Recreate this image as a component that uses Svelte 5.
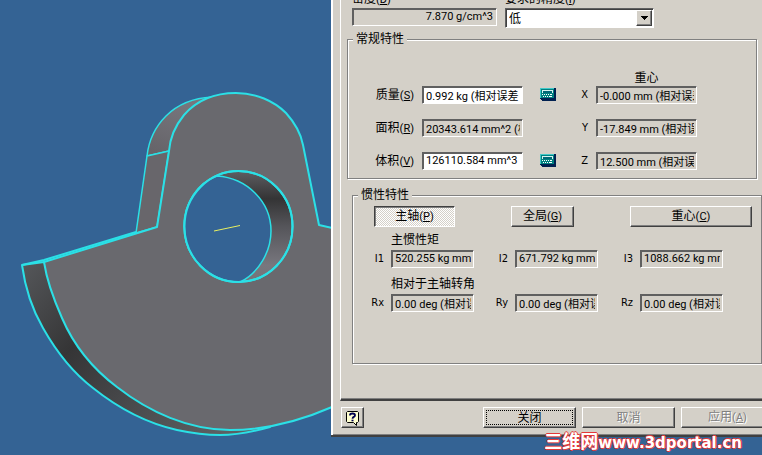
<script lang="ts">
  type Property = {
    id: string
    label: string
    key: string
    value: string
    editable: boolean
    axis: string
    center: string
  }

  const properties: Property[] = [
    { id: 'mass', label: '质量', key: 'S', value: '0.992 kg (相对误差 = 0.0001%)', editable: true, axis: 'X', center: '-0.000 mm (相对误差)' },
    { id: 'area', label: '面积', key: 'R', value: '20343.614 mm^2 (相对误差)', editable: false, axis: 'Y', center: '-17.849 mm (相对误差)' },
    { id: 'volume', label: '体积', key: 'V', value: '126110.584 mm^3', editable: true, axis: 'Z', center: '12.500 mm (相对误差)' },
  ]

  const sections = [
    {
      title: '主惯性矩',
      fields: [
        { name: 'I1', value: '520.255 kg mm^2' },
        { name: 'I2', value: '671.792 kg mm^2' },
        { name: 'I3', value: '1088.662 kg mm^2' },
      ],
    },
    {
      title: '相对于主轴转角',
      fields: [
        { name: 'Rx', value: '0.00 deg (相对误差)' },
        { name: 'Ry', value: '0.00 deg (相对误差)' },
        { name: 'Rz', value: '0.00 deg (相对误差)' },
      ],
    },
  ]

  let mode = $state('principal')
  let accuracy = $state('low')
</script>

{#snippet hotkey(key: string)}<span class="hotkey">(<u>{key}</u>)</span>{/snippet}

{#snippet calculator()}
  <svg class="calc" width="16" height="16" viewBox="0 0 16 16" aria-hidden="true" shape-rendering="crispEdges">
    <path d="M0 2h15l1 1v12H2l-2-2z" fill="#002050" />
    <path d="M0 2h14v10H0z" fill="#008080" />
    <path d="M0 2h14v1H1v9H0z" fill="#40c8c8" />
    <path d="M2 4h11v3H2z" fill="#d8f4f0" />
    <path d="M3 5h9v2H3z" fill="#006878" />
    <path d="M2 8h1v1H2zM4 8h1v1H4zM6 8h1v1H6zM8 8h1v1H8zM10 8h2v1h-2zM3 10h1v1H3zM5 10h1v1H5zM7 10h1v1H7zM9 10h3v1H9z" fill="#fff" />
  </svg>
{/snippet}

<main class="desktop">
  <svg class="model" width="340" height="455" viewBox="0 0 340 455" aria-hidden="true">
    <defs>
      <linearGradient id="rim" x1="22" y1="265" x2="220" y2="435" gradientUnits="userSpaceOnUse">
        <stop offset="0" stop-color="#55575a" />
        <stop offset="0.35" stop-color="#353536" />
        <stop offset="0.6" stop-color="#454648" />
        <stop offset="1" stop-color="#5c6063" />
      </linearGradient>
      <linearGradient id="bore" x1="0" y1="171" x2="0" y2="282" gradientUnits="userSpaceOnUse">
        <stop offset="0" stop-color="#5e5e62" />
        <stop offset="0.25" stop-color="#343435" />
        <stop offset="0.5" stop-color="#55555a" />
        <stop offset="0.85" stop-color="#78777e" />
        <stop offset="1" stop-color="#747379" />
      </linearGradient>
      <linearGradient id="shoulder" x1="180" y1="100" x2="160" y2="154" gradientUnits="userSpaceOnUse">
        <stop offset="0" stop-color="#77767d" />
        <stop offset="1" stop-color="#666469" />
      </linearGradient>
    </defs>

    <g stroke="#2be0e6" stroke-width="2" stroke-linejoin="round">
      <path fill="url(#rim)" d="M22 265C25 287 32 309 43 328C56 351 72 372 93 388C118 408 146 423 177 430C191 433 206 435 220 435C236 435 252 432 270 427L230 400L44 262Z" />
      <path fill="url(#shoulder)" stroke-width="1.5" d="M147 156C149 138 156 126 166 116C178 104 193 98 212 97L200 150L169 151Z" />
      <path fill="#68666b" stroke-width="1.5" d="M147 156L136 233L157 227L169 151Z" />
      <path fill="#69696e" d="M44 262L157 227L169 151C170 138 175 126 184 115C197 100 215 93 236 93C256 93 274 101 286 113C295 123 301 134 303 145L319 225L345 231V401L332 407C300 421 265 430 230 430C189 430 149 412 117 387C93 369 74 346 62 318C54 300 47 282 44 262Z" />
      <path fill="none" d="M22 265L44 260L136 232" />
      <ellipse fill="url(#bore)" cx="238.500" cy="226.500" rx="54" ry="55.500" />
      <path fill="#346394" stroke-width="1.5" d="M217 176C232 177 245 183 255 193C265 203 271 217 271 231C271 251 259 273 240 282C209 282 184 257 184 226C184 204 197 183 217 176Z" />
      <ellipse fill="none" cx="238.500" cy="226.500" rx="54" ry="55.500" />
    </g>
    <path d="M214 231L240 225.500" stroke="#e8f060" fill="none" />
  </svg>

  <section class="dialog" role="dialog" aria-label="特性">
    <div class="panel">
      <div class="top">
        <div class="density">
          <label class="cut" for="density"><span>密度{@render hotkey('D')}</span></label>
          <input id="density" class="field right" readonly value="7.870 g/cm^3" />
        </div>
        <div class="accuracy">
          <label class="cut" for="accuracy"><span>要求的精度{@render hotkey('I')}</span></label>
          <div class="combo">
            <select id="accuracy" bind:value={accuracy}>
              <option value="low">低</option>
              <option value="medium">中</option>
              <option value="high">高</option>
            </select>
            <span class="arrow" aria-hidden="true">
              <svg width="7" height="4" viewBox="0 0 7 4" shape-rendering="crispEdges"><path d="M0 0h7v1H6v1H5v1H4v1H3V3H2V2H1V1H0z" /></svg>
            </span>
          </div>
        </div>
      </div>

      <fieldset class="general">
        <legend>常规特性</legend>
        <div class="general-grid">
          <span class="center-title">重心</span>
          {#each properties as p}
            <label class="name first" for={p.id}>{p.label}{@render hotkey(p.key)}</label>
            <input id={p.id} class="field" class:editable={p.editable} readonly={!p.editable} value={p.value} />
            <span class="icon-cell">
              {#if p.editable}{@render calculator()}{/if}
            </span>
            <label class="name axis" for="center-{p.axis}">{p.axis}</label>
            <input id="center-{p.axis}" class="field" readonly value={p.center} />
          {/each}
        </div>
      </fieldset>

      <fieldset class="inertia">
        <legend>惯性特性</legend>
        <div class="modes">
          <button class="principal" class:pressed={mode === 'principal'} onclick={() => (mode = 'principal')}>主轴{@render hotkey('P')}</button>
          <button class="global" class:pressed={mode === 'global'} onclick={() => (mode = 'global')}>全局{@render hotkey('G')}</button>
          <button class="gravity" class:pressed={mode === 'gravity'} onclick={() => (mode = 'gravity')}>重心{@render hotkey('C')}</button>
        </div>
        {#each sections as section}
          <h3>{section.title}</h3>
          <div class="values">
            {#each section.fields as f}
              <label class="name axis" for={f.name}>{f.name}</label>
              <input id={f.name} class="field" readonly value={f.value} />
            {/each}
          </div>
        {/each}
      </fieldset>
    </div>

    <footer>
      <button class="help" aria-label="帮助">
        <svg width="15" height="16" viewBox="0 0 15 16" aria-hidden="true">
          <path d="M2.500 1.500h10l1 1v9l-1 1h-1v3l-3-3h-6l-1-1v-9z" fill="#ffffd0" stroke="#000" />
          <path d="M5 5.500V5q0-1.500 2.500-1.500T10 5.200q0 1-1.200 1.700T7.500 8.800" fill="none" stroke="#000050" stroke-width="1.800" />
          <path d="M6.500 9.700h2v1.600h-2z" fill="#000050" />
        </svg>
      </button>
      <button class="action default">关闭</button>
      <button class="action" disabled>取消</button>
      <button class="action" disabled>应用{@render hotkey('A')}</button>
    </footer>
  </section>

  <div class="watermark"><span>三维网</span>www.3dportal.cn</div>
</main>

<style>
  :global(body) {
    margin: 0;
  }
  .desktop {
    position: relative;
    min-height: 100vh;
    overflow: hidden;
    background: #346394;
    color: #000;
    font: 12px/16px Roboto, "Noto Sans CJK SC", sans-serif;
  }
  .model {
    display: block;
  }
  .dialog {
    position: absolute;
    top: 0;
    left: 331px;
    right: -20px;
    box-sizing: border-box;
    padding: 0 6px 7px 7px;
    background: #d4d0c8;
    border: solid #404040;
    border-width: 0 2px 2px 0;
    box-shadow: inset 2px 0 0 #fff, inset 0 -1px 0 #808080;
  }
  .panel {
    margin-left: 2px;
    padding-bottom: 35px;
    border-left: 1px solid #fff;
    border-bottom: 2px solid #404040;
    box-shadow: inset 0 -1px 0 #808080;
  }
  .hotkey { font-size: 11px; }

  .top {
    display: flex;
    gap: 8px;
    margin-left: 11px;
  }
  .density { width: 145px; }
  .accuracy { width: 149px; }
  .cut {
    display: flex;
    align-items: flex-end;
    height: 8px;
    overflow: hidden;
  }
  .cut span { flex-shrink: 0; }

  .field {
    box-sizing: border-box;
    width: 100%;
    min-width: 0;
    height: 18px;
    margin: 0;
    padding: 0 2px 1px 3px;
    display: block;
    color: #000;
    font: 11px/14px Roboto, "Noto Sans CJK SC", sans-serif;
    background: #d4d0c8;
    border: 1px solid;
    border-color: #606060 #fff #fff #606060;
    box-shadow: inset 1px 1px 0 #606060;
    outline: none;
    border-radius: 0;
  }
  .editable { background: #fff; }
  .right {
    padding-right: 3px;
    text-align: right;
  }

  .combo {
    position: relative;
  }
  select {
    appearance: none;
    display: block;
    box-sizing: border-box;
    width: 100%;
    height: 20px;
    padding: 1px 20px 0 3px;
    font: inherit;
    color: #000;
    background: #fff;
    border: 1px solid;
    border-color: #606060 #fff #fff #606060;
    border-radius: 0;
    box-shadow: inset 1px 1px 0 #404040;
  }
  .arrow {
    position: absolute;
    top: 2px;
    right: 2px;
    bottom: 2px;
    width: 16px;
    box-sizing: border-box;
    display: grid;
    place-items: center;
    pointer-events: none;
    background: #d4d0c8;
    border: 1px solid;
    border-color: #fff #404040 #404040 #fff;
    box-shadow: inset -1px -1px 0 #808080;
  }

  fieldset {
    min-width: 0;
    margin: 0;
    padding: 0;
    border: 1px solid #808080;
    box-shadow: 1px 1px 0 #fff, inset 1px 1px 0 #fff;
  }
  legend {
    margin-left: 5px;
    padding: 0 3px;
    background: #d4d0c8;
  }
  .general {
    margin: 3px 17px 0 6px;
    padding: 23px 0 8px;
  }
  .general-grid {
    display: grid;
    grid-template-columns: 66px 101px 25px 24px 101px;
    grid-template-rows: 16px 33px 33px 18px;
    column-gap: 8px;
    align-items: start;
  }
  .center-title {
    grid-column: 5;
    text-align: center;
  }
  .first { grid-column: 1; }
  .name {
    line-height: 18px;
    text-align: right;
    white-space: nowrap;
  }
  .axis {
    font-family: "DejaVu Sans Condensed", sans-serif;
    font-size: 11px;
  }
  .icon-cell {
    display: flex;
    justify-content: flex-end;
  }
  .calc { display: block; }

  .inertia {
    margin: 8px 12px 0 11px;
    padding: 3px 0 43px;
  }
  .modes {
    display: flex;
    gap: 56px;
    margin: 0 0 5px 21px;
  }
  button {
    box-sizing: border-box;
    height: 21px;
    padding: 0;
    color: #000;
    font: inherit;
    line-height: 16px;
    background: #d4d0c8;
    border: 1px solid;
    border-color: #fff #404040 #404040 #fff;
    border-radius: 0;
    box-shadow: inset -1px -1px 0 #808080;
  }
  .principal { width: 81px; }
  .global { width: 63px; }
  .gravity { width: 122px; }
  .pressed {
    background: repeating-conic-gradient(#fff 0 25%, #d4d0c8 0 50%) 0 0 / 2px 2px;
    border-color: #404040 #fff #fff #404040;
    box-shadow: inset 1px 1px 0 #808080;
  }
  h3 {
    margin: 0 0 2px 38px;
    font: inherit;
  }
  .values {
    display: grid;
    grid-template-columns: 31px 83px 27px 83px 28px 83px;
    column-gap: 7px;
    margin-bottom: 8px;
  }

  footer {
    display: flex;
    gap: 6px;
    padding: 6px 0 0 3px;
  }
  .help {
    display: grid;
    place-items: center;
    width: 23px;
    margin-right: auto;
  }
  .action { width: 93px; }
  .default {
    outline: 1px dotted #000;
    outline-offset: -4px;
  }
  button:disabled {
    color: #808080;
    text-shadow: 1px 1px 0 #fff;
  }

  .watermark {
    position: absolute;
    right: 20px;
    bottom: 2px;
    color: #fff;
    font: bold 15px/20px "DejaVu Sans", "Noto Sans CJK SC", sans-serif;
    white-space: nowrap;
    text-shadow: 1px 0 #e43838, -1px 0 #e43838, 0 1px #e43838, 0 -1px #e43838;
  }
  .watermark span {
    font-size: 18px;
  }
</style>
